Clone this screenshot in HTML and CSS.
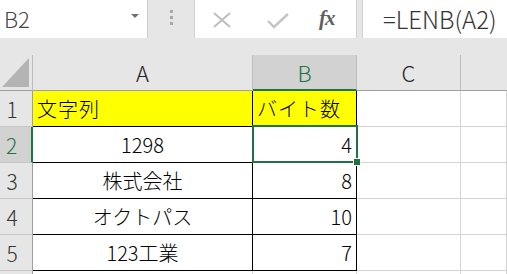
FILE: index.html
```html
<!DOCTYPE html>
<html lang="ja">
<head>
    <meta charset="UTF-8">
    <meta name="viewport" content="width=device-width, initial-scale=1.0">
    <title>LENB</title>
    <link rel="stylesheet" href="styles.css">
</head>
<body>
    <div class="formula-bar">
        <div class="name-box">
            <span class="ref">B2</span>
            <span class="caret"></span>
        </div>
        <div class="grip"><i></i><i></i><i></i></div>
        <div class="buttons">
            <svg class="icon" width="18" height="16" viewBox="0 0 18 16">
                <path d="M1 1 L17 15 M17 1 L1 15" stroke="#bdbdbd" stroke-width="2" fill="none"/>
            </svg>
            <svg class="icon" width="22" height="16" viewBox="0 0 22 16">
                <path d="M1 8 L7 14 L21 1" stroke="#c4c4c4" stroke-width="2.4" fill="none"/>
            </svg>
            <span class="fx">fx</span>
        </div>
        <div class="formula">=LENB(A2)</div>
    </div>

    <div class="sheet">
        <div class="corner"><span class="tri"></span></div>
        <div class="col-head">A</div>
        <div class="col-head active">B</div>
        <div class="col-head">C</div>
        <div class="col-head last"></div>

        <div class="row-head">1</div>
        <div class="cell boxed yellow">文字列</div>
        <div class="cell boxed yellow">バイト数</div>
        <div class="cell"></div>
        <div class="cell"></div>

        <div class="row-head active">2</div>
        <div class="cell boxed center">1298</div>
        <div class="cell boxed right">4</div>
        <div class="cell"></div>
        <div class="cell"></div>

        <div class="row-head">3</div>
        <div class="cell boxed center">株式会社</div>
        <div class="cell boxed right">8</div>
        <div class="cell"></div>
        <div class="cell"></div>

        <div class="row-head">4</div>
        <div class="cell boxed center">オクトパス</div>
        <div class="cell boxed right">10</div>
        <div class="cell"></div>
        <div class="cell"></div>

        <div class="row-head">5</div>
        <div class="cell boxed center">123工業</div>
        <div class="cell boxed right">7</div>
        <div class="cell"></div>
        <div class="cell"></div>

        <div class="row-head short"></div>
        <div class="cell short"></div>
        <div class="cell short"></div>
        <div class="cell short"></div>
        <div class="cell short"></div>

        <div class="selection"><span class="handle"></span></div>
    </div>
</body>
</html>
```

FILE: styles.css
```css
* {
    margin: 0;
    padding: 0;
    box-sizing: border-box;
}
body {
    background: #e6e6e6;
    font-family: "Noto Sans CJK JP", "Noto Sans", sans-serif;
    font-weight: 300;
    overflow: hidden;
}
.formula-bar {
    display: flex;
    height: 38px;
    margin-bottom: 17px;
}
.name-box {
    width: 148px;
    background: white;
    border-right: 1px solid #d0d0d0;
    display: flex;
    align-items: center;
    justify-content: space-between;
    padding: 0 8px 2px 4px;
}
.ref {
    font-size: 22px;
    color: #444;
}
.caret {
    width: 0;
    height: 0;
    border-left: 4px solid transparent;
    border-right: 4px solid transparent;
    border-top: 4px solid #707070;
    margin-bottom: 4px;
}
.grip {
    width: 46px;
    display: flex;
    flex-direction: column;
    align-items: center;
    gap: 3px;
    padding-top: 10px;
}
.grip i {
    width: 3px;
    height: 3px;
    background: #a8a8a8;
}
.buttons {
    width: 163px;
    background: white;
    border-left: 1px solid #d0d0d0;
    border-right: 1px solid #d0d0d0;
    display: flex;
    align-items: center;
    padding-left: 18px;
}
.buttons .icon:first-child {
    margin-right: 36px;
    margin-top: 2px;
}
.buttons .icon + .icon {
    margin-right: 30px;
    margin-top: 3px;
}
.fx {
    font-family: "Liberation Serif", serif;
    font-style: italic;
    font-weight: bold;
    font-size: 21px;
    color: #5f5f5f;
    letter-spacing: -1px;
    margin-bottom: 2px;
}
.formula {
    flex: 1;
    margin-left: 5px;
    background: white;
    font-size: 24px;
    color: #333;
    padding: 1px 0 0 20px;
    border-left: 1px solid #d0d0d0;
    white-space: nowrap;
}
.sheet {
    position: relative;
    display: grid;
    grid-template-columns: 33px 220px 104px 104px 1fr;
    grid-auto-rows: 36px;
    background: white;
}
.corner,
.col-head {
    background: #e6e6e6;
    border-right: 1px solid #bdbdbd;
    border-bottom: 1px solid #9f9f9f;
}
.corner {
    position: relative;
}
.tri {
    position: absolute;
    left: 2px;
    top: 3px;
    border-left: 27px solid transparent;
    border-bottom: 29px solid #b4b4b4;
}
.col-head {
    display: flex;
    align-items: center;
    justify-content: center;
    font-size: 22px;
    color: #222;
    padding-bottom: 1px;
}
.col-head.active {
    background: #d2d2d2;
    color: #217346;
    border-bottom: 2px solid #217346;
}
.col-head.last {
    border-right: none;
}
.row-head {
    background: #e6e6e6;
    border-right: 1px solid #9f9f9f;
    border-bottom: 1px solid #c6c6c6;
    display: flex;
    align-items: center;
    justify-content: center;
    padding-right: 8px;
    font-size: 21px;
    color: #333;
}
.row-head.active {
    background: #d2d2d2;
    color: #217346;
    border-right: 2px solid #217346;
}
.cell {
    border-right: 1px solid #d4d4d4;
    border-bottom: 1px solid #d4d4d4;
    display: flex;
    align-items: center;
    font-size: 20px;
    color: #000;
    padding: 0 4px;
    white-space: nowrap;
}
.cell.boxed {
    border-right-color: #000;
    border-bottom-color: #000;
}
.short {
    height: 4px;
    border-bottom: none;
}
.yellow {
    background: #ffff00;
    letter-spacing: 1px;
}
.center {
    justify-content: center;
}
.right {
    justify-content: flex-end;
}
.selection {
    position: absolute;
    left: 252px;
    top: 70px;
    width: 106px;
    height: 38px;
    border: 2px solid #217346;
}
.handle {
    position: absolute;
    right: -4px;
    bottom: -4px;
    width: 6px;
    height: 6px;
    background: #217346;
    outline: 1px solid white;
}
```
